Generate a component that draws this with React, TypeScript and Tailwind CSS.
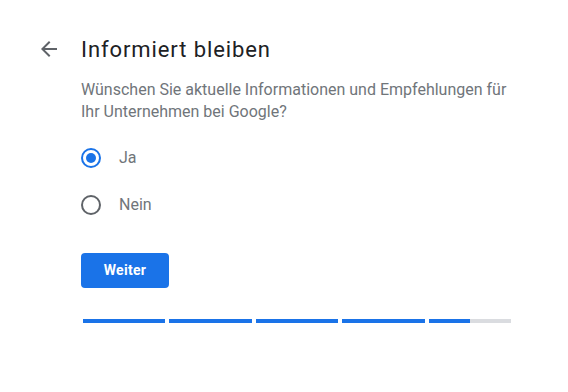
import { useState } from "react";

export default function App() {
  const [choice, setChoice] = useState<"ja" | "nein">("ja");

  const options: { key: "ja" | "nein"; label: string }[] = [
    { key: "ja", label: "Ja" },
    { key: "nein", label: "Nein" },
  ];

  return (
    <div className="w-[568px] h-[392px] bg-white font-['Roboto',sans-serif]">
      <div className="flex items-start pl-[37px] pt-[37px]">
        <button type="button" className="w-6 h-6 flex items-center justify-center text-[#5f6368]">
          <svg width="24" height="24" viewBox="0 0 24 24" fill="currentColor">
            <path d="M20 11H7.83l5.59-5.59L12 4l-8 8 8 8 1.41-1.41L7.83 13H20v-2z" />
          </svg>
        </button>
        <div className="ml-5 w-[440px]">
          <h1 className="mt-px text-[22px] leading-[24px] tracking-[0.9px] text-[#202124] font-normal">
            Informiert bleiben
          </h1>
          <p className="mt-[17px] text-[16px] leading-[22px] text-[#70757a]">
            Wünschen Sie aktuelle Informationen und Empfehlungen für Ihr Unternehmen bei Google?
          </p>

          <div className="mt-[25px] flex flex-col gap-[27px]">
            {options.map((o) => (
              <label key={o.key} className="flex items-center cursor-pointer" onClick={() => setChoice(o.key)}>
                <span
                  className={`w-5 h-5 rounded-full border-2 flex items-center justify-center ${
                    choice === o.key ? "border-[#1a73e8]" : "border-[#5f6368]"
                  }`}
                >
                  {choice === o.key && <span className="w-[10px] h-[10px] rounded-full bg-[#1a73e8]" />}
                </span>
                <span className="ml-[18px] text-[16px] leading-5 text-[#70757a]">{o.label}</span>
              </label>
            ))}
          </div>

          <button
            type="button"
            className="mt-[38px] w-[88px] h-[35px] rounded bg-[#1a73e8] text-white text-[14px] font-bold tracking-[0.3px]"
          >
            Weiter
          </button>

          <div className="mt-[31px] ml-[2px] w-[428px] flex gap-1">
            {[1, 1, 1, 1, 0.5].map((v, i) => (
              <div key={i} className="flex-1 h-1 bg-[#dadce0]">
                <div className="h-full bg-[#1a73e8]" style={{ width: `${v * 100}%` }} />
              </div>
            ))}
          </div>
        </div>
      </div>
    </div>
  );
}
